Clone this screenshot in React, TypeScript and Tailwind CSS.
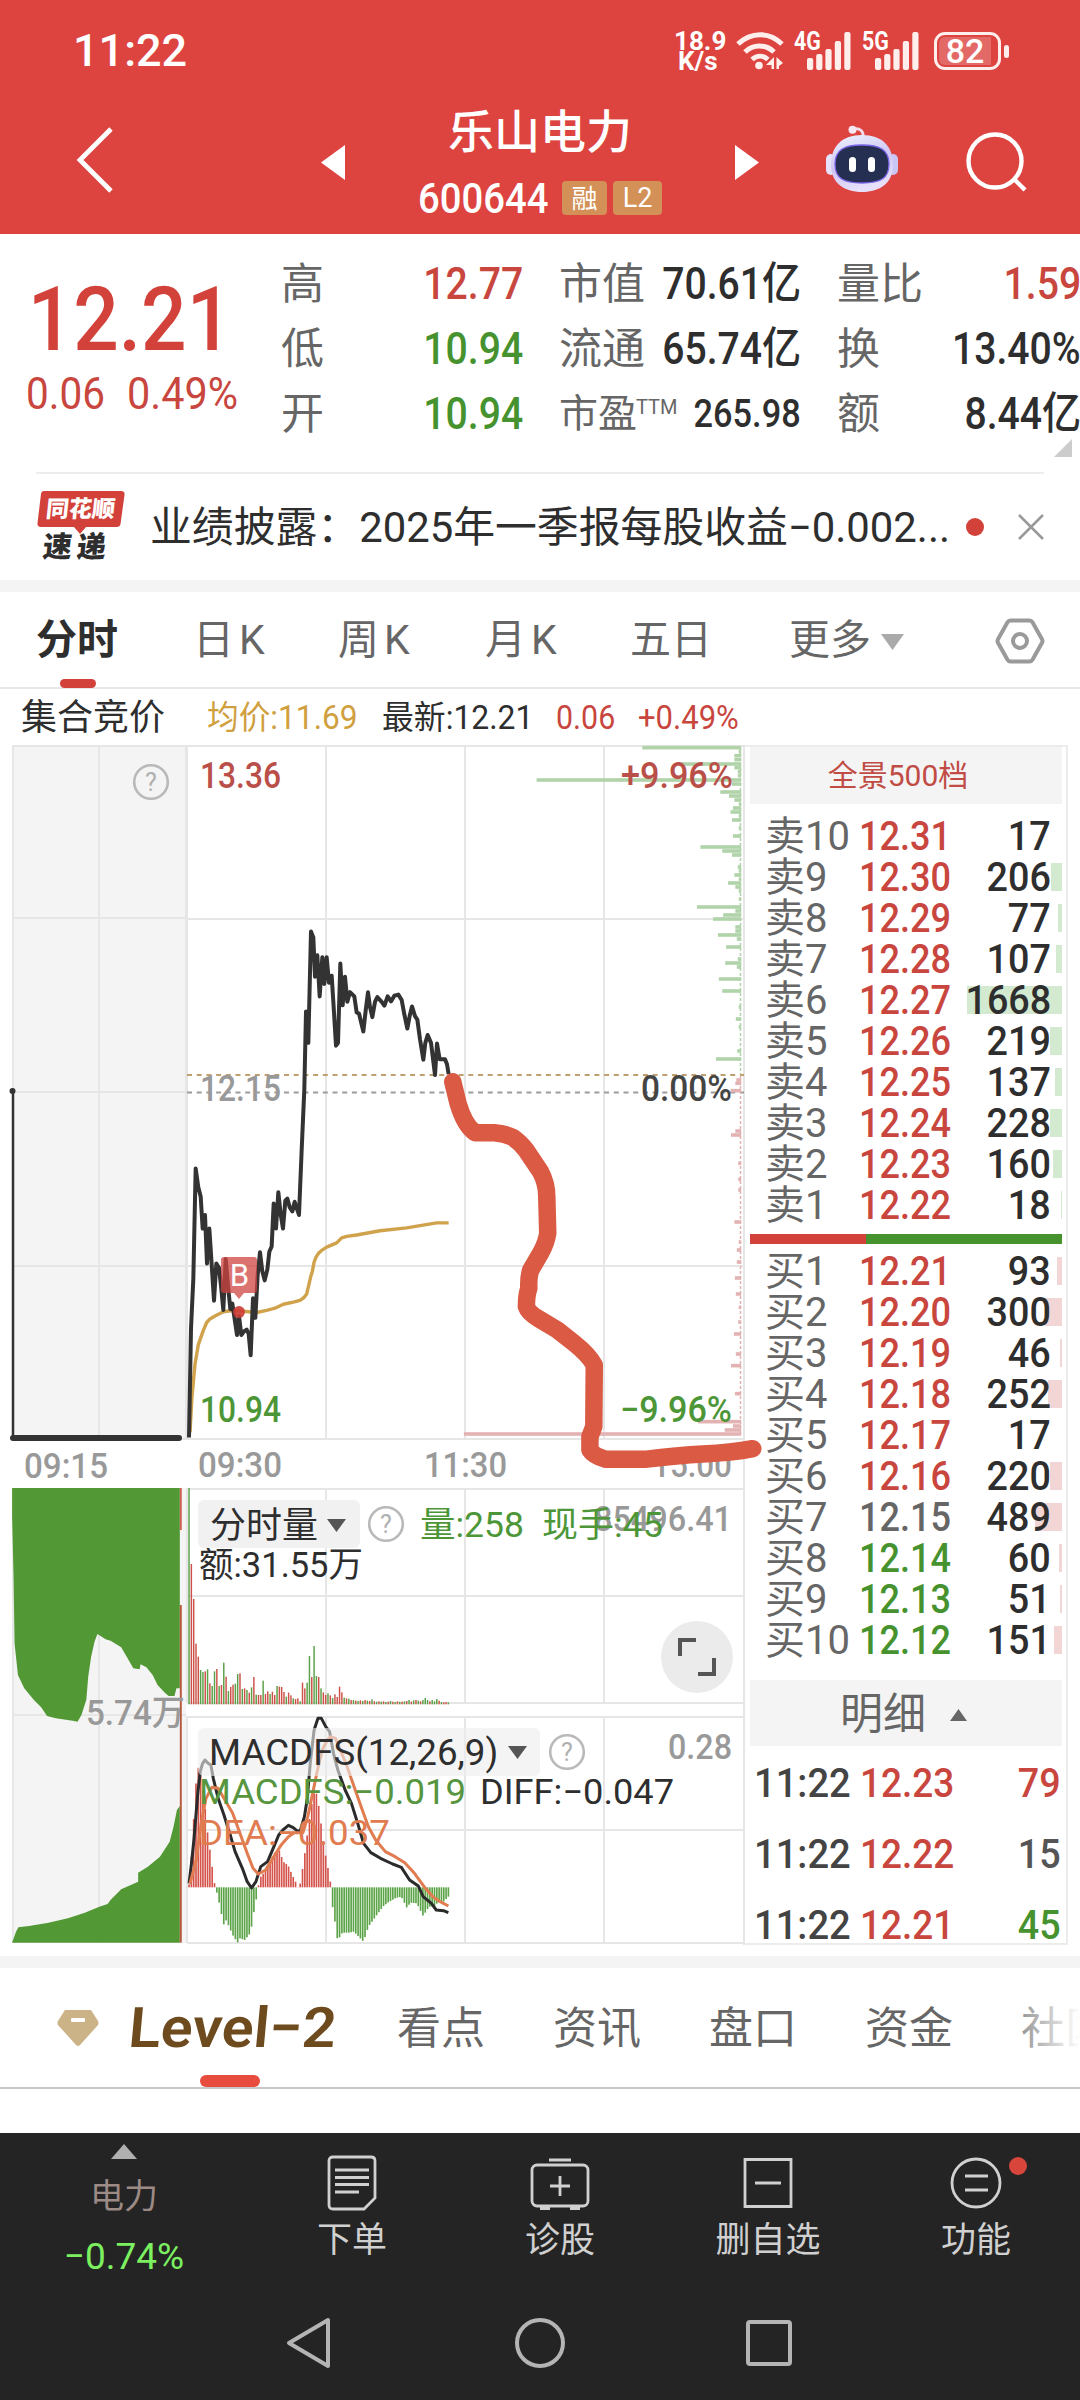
import type { ReactNode } from "react";

/* ---------- data ---------- */

type Level = { label: string; price: string; volume: number; bar: number; tone: "up" | "down" | "flat" };

const asks: Level[] = [
  { label: "卖10", price: "12.31", volume: 17, bar: 0, tone: "up" },
  { label: "卖9", price: "12.30", volume: 206, bar: 11, tone: "up" },
  { label: "卖8", price: "12.29", volume: 77, bar: 4, tone: "up" },
  { label: "卖7", price: "12.28", volume: 107, bar: 6, tone: "up" },
  { label: "卖6", price: "12.27", volume: 1668, bar: 95, tone: "up" },
  { label: "卖5", price: "12.26", volume: 219, bar: 12, tone: "up" },
  { label: "卖4", price: "12.25", volume: 137, bar: 7, tone: "up" },
  { label: "卖3", price: "12.24", volume: 228, bar: 12, tone: "up" },
  { label: "卖2", price: "12.23", volume: 160, bar: 9, tone: "up" },
  { label: "卖1", price: "12.22", volume: 18, bar: 1, tone: "up" },
];

const bids: Level[] = [
  { label: "买1", price: "12.21", volume: 93, bar: 5, tone: "up" },
  { label: "买2", price: "12.20", volume: 300, bar: 17, tone: "up" },
  { label: "买3", price: "12.19", volume: 46, bar: 2, tone: "up" },
  { label: "买4", price: "12.18", volume: 252, bar: 14, tone: "up" },
  { label: "买5", price: "12.17", volume: 17, bar: 0, tone: "up" },
  { label: "买6", price: "12.16", volume: 220, bar: 12, tone: "up" },
  { label: "买7", price: "12.15", volume: 489, bar: 27, tone: "flat" },
  { label: "买8", price: "12.14", volume: 60, bar: 3, tone: "down" },
  { label: "买9", price: "12.13", volume: 51, bar: 2, tone: "down" },
  { label: "买10", price: "12.12", volume: 151, bar: 8, tone: "down" },
];

const toneClass = {
  up: "text-[#c8463e] font-medium",
  down: "text-[#46922f] font-medium",
  flat: "text-[#666666] font-medium",
};

const trades = [
  { time: "11:22", price: "12.23", volume: 79, color: "text-[#c8463e]" },
  { time: "11:22", price: "12.22", volume: 15, color: "text-[#555555]" },
  { time: "11:22", price: "12.21", volume: 45, color: "text-[#46922f]" },
];

const priceLine =
  "27,1505 33,1200 40,1060 47,752 55,805 62,830 68,920 75,882 81,1018 88,920 95,1020 102,1122 109,1018 117,1030 123,1080 130,1148 137,1005 145,1090 151,1145 157,1130 165,1180 171,1218 177,1165 184,1218 192,1208 200,1203 206,1215 212,1275 219,1115 226,1170 233,1050 240,986 247,1040 254,1065 262,1035 268,985 275,970 281,850 288,920 295,818 302,880 309,920 316,842 322,836 329,860 337,872 344,845 350,862 357,882 365,700 373,530 378,312 385,400 393,88 400,105 405,215 412,155 419,270 427,160 433,235 440,160 447,232 455,212 461,300 468,408 474,400 481,178 488,295 495,215 502,285 510,258 523,270 530,315 537,318 550,368 557,310 564,258 570,300 577,328 585,285 592,272 605,285 613,296 623,270 633,284 643,268 655,265 665,280 673,320 682,360 689,325 696,298 705,325 712,335 720,390 730,447 736,400 743,378 753,400 765,490 771,402 779,446 795,446 801,460 806,488";

const averageLine =
  "30,1490 36,1390 45,1300 55,1245 70,1205 80,1183 90,1173 105,1165 130,1153 150,1150 175,1150 230,1155 260,1149 285,1143 310,1132 340,1126 360,1121 372,1113 380,1103 386,1080 392,1055 397,1040 402,1015 408,1000 415,990 425,981 440,972 470,960 485,946 500,942 530,938 600,926 680,918 770,904 806,904";

const diffLine =
  "390,1240 395,1180 400,1110 408,970 413,905 418,880 423,870 428,878 435,885 440,925 450,985 462,1035 475,1095 485,1145 500,1195 510,1235 519,1254 528,1235 538,1190 552,1175 565,1130 575,1095 585,1078 595,1066 605,1073 615,1085 620,1080 628,1040 634,985 640,880 648,780 656,745 663,745 672,770 680,785 688,850 697,900 712,960 725,1000 738,1060 750,1120 765,1148 785,1165 810,1182 828,1192 845,1230 863,1248 873,1280 890,1300 900,1320 915,1322 925,1328";

const deaLine =
  "392,1240 405,1170 415,1060 425,985 437,952 450,955 462,985 480,1030 495,1090 510,1150 522,1195 533,1212 548,1200 565,1160 580,1125 595,1100 607,1088 625,1088 635,1040 645,970 655,900 665,840 675,810 682,800 692,805 702,840 715,885 728,940 745,1010 760,1070 775,1110 795,1145 815,1160 835,1178 855,1210 875,1250 893,1280 908,1295 925,1308";

const auctionTop =
  "25,54 25,140 28,320 30,520 37,615 50,655 70,690 85,712 97,738 115,745 150,752 160,755 168,735 178,690 182,620 188,560 195,515 201,492 218,508 228,512 250,532 262,562 275,595 288,598 290,583 302,592 315,615 325,645 340,668 348,678 360,678 364,655 371,655 371,54";

const auctionBottom =
  "25,1418 33,1385 38,1372 60,1368 100,1358 140,1345 175,1328 205,1310 222,1302 228,1290 250,1258 285,1235 285,1208 305,1190 330,1160 350,1115 358,1070 365,1020 371,1008 371,1418";

/* [y, left x] of the resting-order bars along the right edge */
const sellDepth = [
  [503, 1325], [515, 1524], [527, 1515], [539, 1515], [552, 1405], [563, 1515], [575, 1522], [587, 1522], [600, 1107], [612, 1510],
  [636, 1486], [648, 1504], [660, 1515], [672, 1524], [684, 1512], [696, 1507], [708, 1524], [720, 1510], [744, 1524], [768, 1512],
  [801, 1445], [813, 1490], [825, 1510], [861, 1522], [873, 1524], [885, 1515], [897, 1524], [909, 1502], [921, 1517], [933, 1524],
  [957, 1524], [981, 1438], [993, 1517], [1005, 1492], [1017, 1471], [1041, 1517], [1053, 1517], [1065, 1481], [1077, 1520],
  [1101, 1498], [1137, 1522], [1149, 1496], [1161, 1520], [1197, 1483], [1233, 1490], [1281, 1524], [1317, 1518], [1341, 1524],
  [1413, 1521], [1437, 1477],
];
const buyDepth = [
  [90, 1519], [100, 1517], [122, 1507], [243, 1517], [255, 1508], [340, 1523], [388, 1523], [420, 1523], [516, 1515], [576, 1524],
  [600, 1520], [636, 1520], [684, 1516], [732, 1518], [772, 1524], [816, 1523], [852, 1514], [912, 1518], [947, 1508], [1031, 1516],
  [1115, 1440], [1128, 1512], [1140, 1495], [1152, 957],
];

const volumeTops: [number, string][] = (
  "54g 282r 387r 521r 560r 600g 606g 604r 598g 640r 648g 604g 597r 648g 645r 578g 620r 663g 651r 644r 641g 612g 610r 657g 655r 660g 668r 652g 621r 674g 675r 675r 632g 672r 664r 672g 665r 675r 648g 650r 651r 666r 680g 668r 676r 685g 687r 685r 694g 638r 655r 638g 558g 621r 528g 618g 621r 655g 667r 675r 670g 676r 684g 673r 681r 650r 667r 683g 685r 686g 690r 690g 692r 693g 691r 693g 690r 692g 693r 688g 694r 695g 694r 695g 694r 696g 695r 693g 695r 696g 694r 695g 695r 694g 693r 690g 695r 691g 690r 692g 694r 690g 684g 690g 694r 690g 694g 687g 692r 696g 697r 696r 697g"
    .split(" ")
    .map((t) => [parseInt(t, 10), t.endsWith("g") ? "#5aa046" : "#cc5249"] as [number, string])
);

const histogramKeys = [
  [390, 1243], [394, 1180], [399, 1060], [404, 945], [408, 890], [413, 905], [418, 950], [423, 1010], [428, 1085], [434, 1150], [442, 1236],
  [446, 1260], [451, 1290], [456, 1325], [461, 1365], [466, 1350], [471, 1365], [480, 1395], [490, 1418], [495, 1405], [505, 1410],
  [515, 1392], [519, 1370], [525, 1315], [532, 1262], [535, 1225], [541, 1215], [551, 1195], [560, 1165], [568, 1145], [577, 1142],
  [584, 1175], [594, 1185], [603, 1215], [613, 1245], [617, 1262], [621, 1225], [627, 1170], [636, 1070], [645, 985], [650, 960],
  [655, 980], [660, 1035], [669, 1135], [680, 1220], [683, 1252], [686, 1310], [691, 1355], [697, 1418], [702, 1395], [707, 1388],
  [720, 1388], [730, 1385], [740, 1400], [750, 1415], [760, 1370], [770, 1350], [780, 1330], [790, 1310], [800, 1298], [815, 1285],
  [828, 1280], [840, 1315], [846, 1298], [860, 1300], [873, 1338], [885, 1310], [895, 1310], [905, 1295], [915, 1295], [925, 1280],
];

function histogramAt(x: number) {
  for (let i = 1; i < histogramKeys.length; i++) {
    const [x0, y0] = histogramKeys[i - 1];
    const [x1, y1] = histogramKeys[i];
    if (x <= x1) return y0 + ((y1 - y0) * (x - x0)) / (x1 - x0);
  }
  return 1280;
}
const slots = Array.from({ length: 113 }, (_, i) => 390 + i * 4.777);

/* ---------- small pieces ---------- */

function Label({
  x, y, w, size, fill, weight = 500, end = false, children,
}: { x: number; y: number; w: number; size: number; fill: string; weight?: number; end?: boolean; children: string }) {
  return (
    <text x={x} y={y} fontSize={size} fill={fill} fontWeight={weight} textLength={w} lengthAdjust="spacingAndGlyphs" textAnchor={end ? "end" : "start"}>
      {children}
    </text>
  );
}

function Help({ cx, cy }: { cx: number; cy: number }) {
  return (
    <g>
      <circle cx={cx} cy={cy} r="16.8" fill="none" stroke="#b9b9b9" strokeWidth="2.6" />
      <text x={cx} y={cy + 9} fontSize="25" fill="#b0b0b0" textAnchor="middle">?</text>
    </g>
  );
}

function Signal() {
  return (
    <svg width="44" height="38" viewBox="0 0 44 38" fill="#ffefec">
      <rect x="0" y="26" width="6.200" height="12" rx="2" />
      <rect x="9.200" y="22" width="6.200" height="16" rx="2" />
      <rect x="18.400" y="17" width="6.200" height="21" rx="2" />
      <rect x="27.800" y="9" width="6.200" height="29" rx="2" />
      <rect x="37.300" y="0" width="6.200" height="38" rx="2" />
    </svg>
  );
}

function StatusBar() {
  return (
    <div className="flex h-[102px] items-center pl-[73px]">
      <span className="w-[601px] origin-left text-[45px] font-medium">11:22</span>
      <div className="flex w-[62px] flex-col text-[26px] leading-[20px] font-bold">
        <span className="origin-left">18.9</span>
        <span className="origin-left pl-1">K/s</span>
      </div>
      <svg width="48" height="38" viewBox="0 0 48 38" fill="none" stroke="#ffefec" strokeWidth="5">
        <path d="M2 12C15 -.5 33 -.5 46 12" />
        <path d="M9 20C17 12 30 12 38 20" />
        <path d="M16 27.500c5-4.500 11-4.500 16 0" />
        <circle cx="23" cy="33.500" r="3.800" fill="#ffefec" stroke="none" />
        <path d="M38 25v12h-2.500v-4H30zM40.500 25v12h2.500v-3l4-3z" fill="#ffefec" stroke="none" />
      </svg>
      <div className="relative ml-[23px]">
        <span className="absolute -top-[4px] -left-[13px] origin-left scale-x-[0.82] text-[26px] leading-[26px] font-bold">4G</span>
        <Signal />
      </div>
      <div className="relative ml-[24px]">
        <span className="absolute -top-[4px] -left-[13px] origin-left scale-x-[0.82] text-[26px] leading-[26px] font-bold">5G</span>
        <Signal />
      </div>
      <div className="ml-[15px] flex h-[38px] w-[67px] items-center rounded-[11px] border-[3px] border-[#ffefec] p-[2px]">
        <div className="flex h-full w-[52px] items-center justify-center rounded-l-[6px] bg-white/20 text-[34px] leading-none font-medium">82</div>
      </div>
      <div className="ml-[3px] h-[13px] w-[5px] rounded-sm bg-[#ffefec]" />
    </div>
  );
}

function TitleBar() {
  return (
    <div className="flex h-[132px] items-start pl-[74px]">
      <svg className="mt-[24px]" width="42" height="68" viewBox="0 0 42 68" fill="none" stroke="#fff" strokeWidth="4.800">
        <path d="M37 3 6 34l31 31" />
      </svg>
      <svg className="mt-[43px] ml-[205px]" width="24" height="35" viewBox="0 0 24 35" fill="#fff"><path d="M24 0v35L0 17.500z" /></svg>
      <div className="flex w-[390px] flex-col items-center">
        <div className="mt-[6px] h-[50px] text-[46px] leading-[48px] font-medium">乐山电力</div>
        <div className="mt-[18px] flex h-[44px] items-center">
          <span className="w-[144px] origin-left scale-x-[0.89] text-[43px] leading-[44px] font-medium">600644</span>
          <span className="flex h-[34px] w-[45px] items-center justify-center rounded-[4px] bg-[#d39057] pt-[2px] text-[26px] leading-none">融</span>
          <span className="ml-[6px] flex h-[34px] w-[49px] items-center justify-center rounded-[4px] bg-[#d39057] text-[27px] leading-none">L2</span>
        </div>
      </div>
      <svg className="mt-[43px]" width="24" height="35" viewBox="0 0 24 35" fill="#fff"><path d="M0 0v35L24 17.500z" /></svg>
      <svg className="mt-[23px] ml-[66px]" width="74" height="68" viewBox="0 0 74 68">
        <defs>
          <linearGradient id="shell" x1="0" y1="0" x2="0.300" y2="1">
            <stop offset="0" stopColor="#eef4ff" />
            <stop offset="0.550" stopColor="#cfc6f2" />
            <stop offset="1" stopColor="#e6e0fa" />
          </linearGradient>
        </defs>
        <path d="M38 13c1-7-3-10-9-9" fill="none" stroke="#f3dcea" strokeWidth="3" strokeLinecap="round" />
        <circle cx="27.500" cy="4.700" r="4" fill="#f8e6f0" />
        <rect x="1" y="29" width="10" height="21" rx="5" fill="#e6e2fb" />
        <rect x="63" y="29" width="10" height="21" rx="5" fill="#c9c6f3" />
        <path d="M37 10c20 0 31 11 31 30 0 18-13 27-31 27S6 58 6 40c0-19 11-30 31-30z" fill="url(#shell)" />
        <path d="M37 20c18 0 27 5 27 19 0 14-8 19-27 19s-27-5-27-19c0-14 9-19 27-19z" fill="#252f52" stroke="#7a66e6" strokeWidth="1.300" />
        <rect x="24" y="32" width="7" height="15" rx="3.500" fill="#fff" />
        <rect x="43" y="32" width="7" height="15" rx="3.500" fill="#fff" />
      </svg>
      <svg className="mt-[28px] ml-[66px]" width="64" height="64" viewBox="0 0 64 64" fill="none" stroke="#fff" strokeWidth="4.400">
        <circle cx="30" cy="31" r="26.500" />
        <path d="m48 48 12 12" />
      </svg>
    </div>
  );
}

function Stat({ name, tag, value, color, narrow }: { name: string; tag?: string; value: string; color: string; narrow?: boolean }) {
  return (
    <div className="relative flex h-[65px] items-center leading-[65px] whitespace-nowrap">
      <span className={narrow ? "relative text-[39px] text-[#666]" : "text-[43px] text-[#666]"}>
        {name}
        {tag && <sup className="absolute top-[15px] left-[77px] text-[20px] leading-none">{tag}</sup>}
      </span>
      <span className={`absolute -right-px origin-right ${narrow ? "scale-x-[0.88] text-[39px]" : "scale-x-[0.89] text-[44px]"} font-medium ${color}`}>{value}</span>
    </div>
  );
}

function Quote() {
  const red = "text-[#c8463e]";
  const green = "text-[#46922f]";
  const dark = "text-[#2e2e2e]";
  return (
    <section className="relative flex h-[238px] pt-[18px]">
      <div className="w-[281px] pl-[26px]">
        <div className="mt-[16px] h-[104px] origin-left scale-x-[0.9] pl-[2px] text-[89px] leading-[104px] font-medium text-[#d2423a]">12.21</div>
        <div className="-mt-[4px] flex h-[52px] leading-[52px]">
          <span className="w-[101px] origin-left scale-x-[0.92] text-[44px] text-[#c8463e]">0.06</span>
          <span className="origin-left scale-x-[0.94] text-[44px] text-[#c8463e]">0.49%</span>
        </div>
      </div>
      <div className="w-[241px]">
        <Stat name="高" value="12.77" color={red} />
        <Stat name="低" value="10.94" color={green} />
        <Stat name="开" value="10.94" color={green} />
      </div>
      <div className="ml-[37px] w-[241px]">
        <Stat name="市值" value="70.61亿" color={dark} />
        <Stat name="流通" value="65.74亿" color={dark} />
        <Stat name="市盈" tag="TTM" value="265.98" color={dark} narrow />
      </div>
      <div className="ml-[37px] w-[243px]">
        <Stat name="量比" value="1.59" color={red} />
        <Stat name="换" value="13.40%" color={dark} />
        <Stat name="额" value="8.44亿" color={dark} />
      </div>
      <svg className="absolute right-[8px] bottom-[15px]" width="18" height="18" fill="#cccccc"><path d="M18 0v18H0z" /></svg>
    </section>
  );
}

function News() {
  return (
    <section className="mx-[36px] flex h-[108px] items-center border-t-2 border-[#ededed]">
      <div className="relative mb-px flex h-[72px] w-[88px] flex-col items-center">
        <svg className="absolute top-0 left-0" width="90" height="44" fill="#d2423a"><path d="M8 0h77q4 0 3.500 4l-4 29q-.5 3-4 3H50l-6 7-6-7H5q-4 0-3.500-4L5 3q.500-3 3-3z" /></svg>
        <span className="relative -skew-x-6 text-[23px] leading-[37px] font-black text-white">同花顺</span>
        <span className="-ml-[6px] -skew-x-6 text-[29px] leading-[38px] font-black tracking-[5px] text-[#2e2e2e]">速递</span>
      </div>
      <p className="ml-[26px] w-[830px] origin-left scale-x-[0.996] text-[42px] whitespace-nowrap text-[#2e2e2e]">
        业绩披露：2025年一季报每股收益−0.002...
      </p>
      <span className="-ml-[14px] size-[18px] shrink-0 rounded-full bg-[#d2423a]" />
      <svg className="ml-auto shrink-0" width="26" height="26" viewBox="0 0 26 26" stroke="#999" strokeWidth="2.500"><path d="m1 1 24 24M25 1 1 25" /></svg>
    </section>
  );
}

function PeriodTabs() {
  return (
    <nav className="relative flex h-[97px] items-center border-b-2 border-[#e8e8e8] pl-[36px] text-[41px] text-[#666]">
      <span className="w-[157px] pt-[3px] font-bold text-[#2e2e2e]">分时</span>
      <span className="w-[145px] pt-[3px]">日<i className="pl-[5px] not-italic">K</i></span>
      <span className="w-[147px] pt-[3px]">周<i className="pl-[5px] not-italic">K</i></span>
      <span className="w-[145px] pt-[3px]">月<i className="pl-[5px] not-italic">K</i></span>
      <span className="w-[159px] pt-[3px]">五日</span>
      <span className="pt-[3px]">更多</span>
      <svg className="mt-[5px] ml-[10px]" width="23" height="18" fill="#aaaaaa"><path d="M0 1h23L11.500 17z" /></svg>
      <svg className="mt-[3px] ml-[91px]" width="50" height="46" viewBox="0 0 50 46" fill="none" stroke="#9a9a9a" strokeWidth="4">
        <path d="M15.500 2.500h19q2 0 3 1.700l9.500 17q1 1.800 0 3.600l-9.500 17q-1 1.700-3 1.700h-19q-2 0-3-1.700L3 24.800q-1-1.800 0-3.600l9.500-17q1-1.700 3-1.700z" />
        <circle cx="25" cy="23" r="7" />
      </svg>
      <span className="absolute -bottom-px left-[60px] h-[9px] w-[36px] rounded-full bg-[#d2423a]" />
    </nav>
  );
}

function Summary() {
  return (
    <div className="flex h-[56px] items-center pt-[2px] pl-[21px] text-[33px] whitespace-nowrap">
      <span className="w-[186px] text-[36px] text-[#2e2e2e]">集合竞价</span>
      <span className="w-[175px] origin-left scale-x-[0.96] text-[#d0a040]">均价:11.69</span>
      <span className="w-[174px] origin-left scale-x-[0.965] text-[#2e2e2e]">最新:12.21</span>
      <span className="w-[82px] origin-left scale-x-[0.92] text-[#c8463e]">0.06</span>
      <span className="origin-left scale-x-[0.94] text-[#c8463e]">+0.49%</span>
    </div>
  );
}

function Chart() {
  const grid = "#e6e6e6";
  return (
    <div className="relative z-10 w-[744px] shrink-0">
      <svg className="block overflow-visible" width="744" height="1200" viewBox="0 745 744 1200">
        <g shapeRendering="crispEdges" fill="none" stroke={grid} strokeWidth="2">
          <rect x="13" y="746" width="173" height="693" fill="#f4f4f4" />
          <rect x="13" y="1488" width="173" height="455" fill="#f4f4f4" stroke="none" />
          <path d="M99 745v694M12 918h174M12 1092h174M12 1266h174M99 1488v455M12 1715h174M13 1488v455" />
          <path d="M187 746h557M187 919h557M187 1266h557M187 1439h557M187 745v694M326 745v694M465 745v694M604 745v694M744 745v1200" />
          <path d="M187 1489h557M187 1596h557M187 1703h557M326 1488v215M465 1488v215M604 1488v215M187 1717h557M187 1830h557M187 1943h557M326 1716v227M465 1716v227M604 1716v227M187 1488v215M187 1716v227" />
        </g>

        <g strokeWidth="2.200" strokeDasharray="5 4.700">
          <path d="M187 1075h557" stroke="#c0a070" />
          <path d="M187 1092.500h557" stroke="#9c9c9c" />
        </g>

        {sellDepth.map(([y, x]) => (
          <rect key={y} x={x / 2.063} y={580 + y / 3 - 1.8} width={(1529 - x) / 2.063} height="3.600" fill="#b0d3aa" />
        ))}
        {buyDepth.map(([y, x]) => (
          <rect key={y} x={x / 2.063} y={1050 + y / 3 - 1.8} width={(1529 - x) / 2.063} height="3.600" fill="#e3b3b3" />
        ))}
        <path d="M740.500 748v326" stroke="#b0d3aa" strokeWidth="1.500" strokeDasharray="3 2" />
        <path d="M740.500 1076v360" stroke="#e3b3b3" strokeWidth="1.500" strokeDasharray="3 2" />

        <g fontFamily="Roboto, 'Noto Sans CJK SC', sans-serif">
          <Label x={200} y={788} w={81} size={37} fill="#b94f48">13.36</Label>
          <Label x={733} y={788} w={112} size={36} fill="#b94f48" end>+9.96%</Label>
          <Label x={200} y={1101} w={81} size={36} fill="#999">12.15</Label>
          <Label x={732} y={1101} w={91} size={36} fill="#444" end>0.00%</Label>
          <Label x={200} y={1422} w={81} size={36} fill="#4d9638">10.94</Label>
          <Label x={732} y={1422} w={112} size={36} fill="#4d9638" end>−9.96%</Label>
          <Label x={24} y={1478} w={84} size={35} fill="#999">09:15</Label>
          <Label x={198} y={1477} w={84} size={35} fill="#999">09:30</Label>
          <Label x={424} y={1477} w={83} size={35} fill="#999">11:30</Label>
          <Label x={732} y={1477} w={80} size={35} fill="#999" end>15:00</Label>
          <Help cx={151} cy={782} />
        </g>

        <path d="M13 1092v346" stroke="#333" strokeWidth="2.500" />
        <circle cx="12.500" cy="1091" r="3" fill="#333" />
        <path d="M13 1438h166" stroke="#333" strokeWidth="6" strokeLinecap="round" />

        <g transform="translate(180 900) scale(.33333 .35714)" fill="none" strokeLinejoin="round">
          <polyline points={averageLine} stroke="#d0a24c" strokeWidth="3.400" vectorEffect="non-scaling-stroke" />
          <polyline points={priceLine} stroke="#333" strokeWidth="4" vectorEffect="non-scaling-stroke" />
        </g>

        <g fontFamily="Roboto, sans-serif">
          <path d="M224 1257h30q3 0 3 3v30q0 3-3 3h-10l-5 6-5-6h-10q-3 0-3-3v-30q0-3 3-3z" fill="#cf4642" fillOpacity=".75" />
          <text x="239.500" y="1286" fontSize="31" fill="#fff" textAnchor="middle">B</text>
          <circle cx="239" cy="1312" r="6" fill="#cc3b35" fillOpacity=".9" />
        </g>

        <g transform="translate(0 1470) scale(.48473 .33333)">
          <polygon points={auctionTop} fill="#529834" />
          <polygon points={auctionBottom} fill="#529834" />
          <rect x="371" y="54" width="4" height="126" fill="#d0604f" />
          <rect x="371" y="405" width="4" height="1013" fill="#b8583f" />
          {slots.map((x, i) => (
            <rect key={x} x={x - 1.500} y={volumeTops[i][0]} width="3" height={703 - volumeTops[i][0]} fill={volumeTops[i][1]} />
          ))}
          {slots.map((x) => {
            const y = histogramAt(x);
            return <rect key={x} x={x - 1.700} y={Math.min(y, 1252)} width="3.400" height={Math.abs(1252 - y)} fill={y < 1252 ? "#d4534b" : "#5ba347"} />;
          })}
          <g fill="none" strokeWidth="3" strokeLinejoin="round">
            <polyline points={diffLine} stroke="#2b2b2b" vectorEffect="non-scaling-stroke" />
            <polyline points={deaLine} stroke="#e07c50" vectorEffect="non-scaling-stroke" />
          </g>
        </g>

        <g fontFamily="Roboto, 'Noto Sans CJK SC', sans-serif">
          <Label x={86} y={1725} w={99} size={35} fill="#999">5.74万</Label>
          <Label x={732} y={1531} w={138} size={35} fill="#999" end>85496.41</Label>
          <Help cx={386} cy={1524} />
          <Label x={420} y={1537} w={104} size={35} fill="#4d9638" weight={400}>量:258</Label>
          <Label x={542} y={1537} w={121} size={35} fill="#4d9638" weight={400}>现手:45</Label>
          <Label x={199} y={1577} w={164} size={35} fill="#2e2e2e" weight={400}>额:31.55万</Label>
          <Help cx={567} cy={1752} />
          <Label x={732} y={1759} w={64} size={35} fill="#999" end>0.28</Label>
          <Label x={199} y={1804} w={267} size={35} fill="#57953f" weight={400}>MACDFS:−0.019</Label>
          <Label x={480} y={1804} w={194} size={35} fill="#2e2e2e" weight={400}>DIFF:−0.047</Label>
          <Label x={199} y={1845} w={191} size={35} fill="#e07c50" weight={400}>DEA:−0.037</Label>
        </g>

        <g transform="translate(0 1050) scale(.48473 .33333)" fill="none">
          <path
            d="M934 95 945 160Q958 225 980 248L1020 248Q1040 250 1058 262Q1075 280 1085 300L1115 365Q1128 400 1128 440L1130 550Q1127 580 1115 610L1095 660Q1090 680 1091 715Q1086 735 1086 770Q1090 788 1110 805L1150 840 1185 880Q1215 915 1226 945L1225 1130 1217 1160 1217 1200Q1225 1218 1250 1228L1330 1228Q1400 1216 1450 1212Q1510 1208 1553 1196"
            stroke="#da5a44"
            strokeWidth="17.500"
            strokeLinecap="round"
            strokeLinejoin="round"
            vectorEffect="non-scaling-stroke"
          />
        </g>
      </svg>

      <button className="absolute top-[755px] left-[198px] flex h-[48px] w-[162px] items-center rounded-[6px] bg-[#f1f1f1] pt-[3px] pl-[12px] text-[36px] leading-none text-[#2e2e2e]">
        分时量
        <svg className="ml-[9px] -mt-[2px]" width="19" height="14" fill="#555"><path d="M0 1h19L9.500 14z" /></svg>
      </button>
      <button className="absolute top-[983px] left-[198px] flex h-[48px] w-[342px] items-center rounded-[6px] bg-[#ececec]/60 pl-[11px] text-[36px] leading-none text-[#2e2e2e]">
        <span className="w-[299px] origin-left scale-x-[1.02] pt-[2px] text-left">MACDFS(12,26,9)</span>
        <svg width="19" height="14" fill="#555"><path d="M0 1h19L9.500 14z" /></svg>
      </button>
      <button className="absolute top-[876px] left-[661px] flex size-[72px] items-center justify-center rounded-full bg-[#ebebeb]">
        <svg width="38" height="38" viewBox="0 0 38 38" fill="none" stroke="#555" strokeWidth="4"><path d="M2 18V2h16M36 20v16H20" /></svg>
      </button>
    </div>
  );
}

function BookRow({ row, barClass }: { row: Level; barClass: string }) {
  return (
    <div className="relative flex h-[41px] items-center pt-px pl-[15px] leading-[41px]">
      <span className={`absolute top-[7px] right-0 h-[28px] ${barClass}`} style={{ width: row.bar }} />
      <span className="relative w-[94px] text-[40px] text-[#666]">{row.label}</span>
      <span className={`relative origin-left scale-x-[0.88] text-[41px] ${toneClass[row.tone]}`}>{row.price}</span>
      <span className="absolute right-[11px] origin-right scale-x-[0.92] text-[41px] font-medium text-[#2e2e2e]">{row.volume}</span>
    </div>
  );
}

function OrderBook() {
  return (
    <aside className="w-[324px] border-t-2 border-r-2 border-b-2 border-[#ececec] pr-[4px] pl-[6px]">
      <div className="flex h-[57px] items-center justify-center bg-[#f4f4f4] pr-[16px] text-[30px] text-[#c04c45]">全景500档</div>
      <div className="mt-[11px]">
        {asks.map((r) => <BookRow key={r.label} row={r} barClass="bg-[#d3ead0]" />)}
      </div>
      <div className="mt-[9px] flex h-[10px]">
        <div className="w-[116px] bg-[#d2423a]" />
        <div className="flex-1 bg-[#46922f]" />
      </div>
      <div className="mt-[6px]">
        {bids.map((r) => <BookRow key={r.label} row={r} barClass="bg-[#f2d6d6]" />)}
      </div>
      <div className="mt-[20px] flex h-[66px] items-center bg-[#f4f4f4] pt-[3px] pl-[90px] text-[43px] text-[#666]">
        明细
        <svg className="ml-[24px]" width="17" height="12" fill="#666"><path d="M0 12h17L8.500 0z" /></svg>
      </div>
      <div className="pt-[2px]">
        {trades.map((t) => (
          <div key={t.price} className="relative mb-[23px] flex h-[48px] items-center pl-[4px] text-[41px] leading-[48px] font-medium first:mt-[11px] last:mb-0">
            <span className="w-[106px] origin-left scale-x-[0.93] text-[#444]">{t.time}</span>
            <span className="origin-left scale-x-[0.9] text-[#c8463e]">{t.price}</span>
            <span className={`absolute right-px origin-right scale-x-[0.92] ${t.color}`}>{t.volume}</span>
          </div>
        ))}
      </div>
    </aside>
  );
}

function DetailTabs() {
  return (
    <nav className="relative flex h-[121px] items-center overflow-hidden border-b-2 border-[#c8c8c8] pl-[57px] text-[44px] whitespace-nowrap text-[#666]">
      <svg className="shrink-0" width="42" height="38" viewBox="0 0 42 38">
        <path d="M8 1h26l7 11q1 2 0 4L23 36q-2 2-4 0L1 16q-1-2 0-4z" fill="#cbb287" />
        <rect x="14" y="9" width="14" height="4" rx="1" fill="#fff" />
      </svg>
      <span className="ml-[30px] w-[268px] shrink-0 origin-left scale-x-[1.06] -skew-x-[5deg] text-[56px] leading-none font-semibold text-[#6e4b1e]">Level−2</span>
      <span className="w-[156px] shrink-0 pt-[3px]">看点</span>
      <span className="w-[156px] shrink-0 pt-[3px]">资讯</span>
      <span className="w-[156px] shrink-0 pt-[3px]">盘口</span>
      <span className="w-[156px] shrink-0 pt-[3px]">资金</span>
      <span className="shrink-0 pt-[3px]">社区</span>
      <span className="absolute top-0 right-0 h-full w-[70px] bg-linear-to-r from-white/20 to-white" />
      <span className="absolute bottom-0 left-[200px] h-[12px] w-[60px] rounded-full bg-[#e84c3f]" />
    </nav>
  );
}

function Action({ label, className, children }: { label: string; className: string; children: ReactNode }) {
  return (
    <div className={`flex flex-col items-center ${className}`}>
      {children}
      <span className="mt-[10px] text-[35px] leading-[40px] text-[#d0d0d0]">{label}</span>
    </div>
  );
}

function BottomBar() {
  return (
    <footer className="h-[267px] bg-[#242424]">
      <div className="flex h-[170px] pl-[24px]">
        <div className="flex w-[200px] flex-col items-center pt-[11px]">
          <svg width="26" height="15" fill="#b0b0b0"><path d="M0 15h26L13 0z" /></svg>
          <span className="mt-[17px] text-[34px] leading-[40px] text-[#9c8a85]">电力</span>
          <span className="mt-[21px] text-[37px] leading-[40px] text-[#7cf060]">−0.74%</span>
        </div>
        <Action label="下单" className="ml-[24px] w-[208px] pt-[22px]">
          <svg width="50" height="56" viewBox="0 0 50 56" fill="none" stroke="#d0d0d0" strokeWidth="2.800">
            <path d="M6 2h38q4 0 4 4v37L37 54H6q-4 0-4-4V6q0-4 4-4z" />
            <path d="M8 15h34M8 22.500h34M8 29.500h34M8 37h24" />
          </svg>
        </Action>
        <Action label="诊股" className="w-[208px] pt-[22px]">
          <svg width="60" height="56" viewBox="0 0 60 56" fill="none" stroke="#d0d0d0" strokeWidth="2.800">
            <rect x="2" y="10" width="56" height="41" rx="5" />
            <path d="M19 5h22M30 21v20M20 31h20M10 53.500h10M40 53.500h10" />
          </svg>
        </Action>
        <Action label="删自选" className="w-[208px] pt-[22px]">
          <svg width="50" height="56" viewBox="0 0 50 56" fill="none" stroke="#d0d0d0" strokeWidth="2.800">
            <path d="M2 4.500h46v47H2zM12 28h26" />
          </svg>
        </Action>
        <Action label="功能" className="relative w-[208px] pt-[22px]">
          <svg width="52" height="56" viewBox="0 0 52 56" fill="none" stroke="#d0d0d0" strokeWidth="2.800">
            <circle cx="26" cy="28" r="24" />
            <path d="M15 21h23M15 35h23" />
          </svg>
          <span className="absolute top-[24px] left-[137px] size-[18px] rounded-full bg-[#d8463b]" />
        </Action>
      </div>
      <div className="flex h-[80px] items-center pl-[286px]">
        <svg width="44" height="52" viewBox="0 0 44 52" fill="none" stroke="#b4b4b4" strokeWidth="4" strokeLinejoin="round"><path d="M42 3v46L3 26z" /></svg>
        <svg className="ml-[184px]" width="52" height="52" viewBox="0 0 52 52" fill="none" stroke="#b4b4b4" strokeWidth="4"><circle cx="26" cy="26" r="23" /></svg>
        <svg className="ml-[180px]" width="46" height="46" viewBox="0 0 46 46" fill="none" stroke="#b4b4b4" strokeWidth="4"><rect x="2" y="2" width="42" height="42" rx="2" /></svg>
      </div>
    </footer>
  );
}

export default function App() {
  return (
    <main className="h-[2400px] w-[1080px] overflow-hidden bg-white [font-family:Roboto,'Noto_Sans_CJK_SC',sans-serif]">
      <header className="h-[234px] bg-[#dd4440] text-white">
        <StatusBar />
        <TitleBar />
      </header>
      <Quote />
      <News />
      <div className="h-[12px] bg-[#f4f4f4]" />
      <PeriodTabs />
      <Summary />
      <div className="flex h-[1200px]">
        <Chart />
        <OrderBook />
      </div>
      <div className="mt-[11px] h-[12px] bg-[#f4f4f4]" />
      <DetailTabs />
      <div className="h-[44px]" />
      <BottomBar />
    </main>
  );
}
